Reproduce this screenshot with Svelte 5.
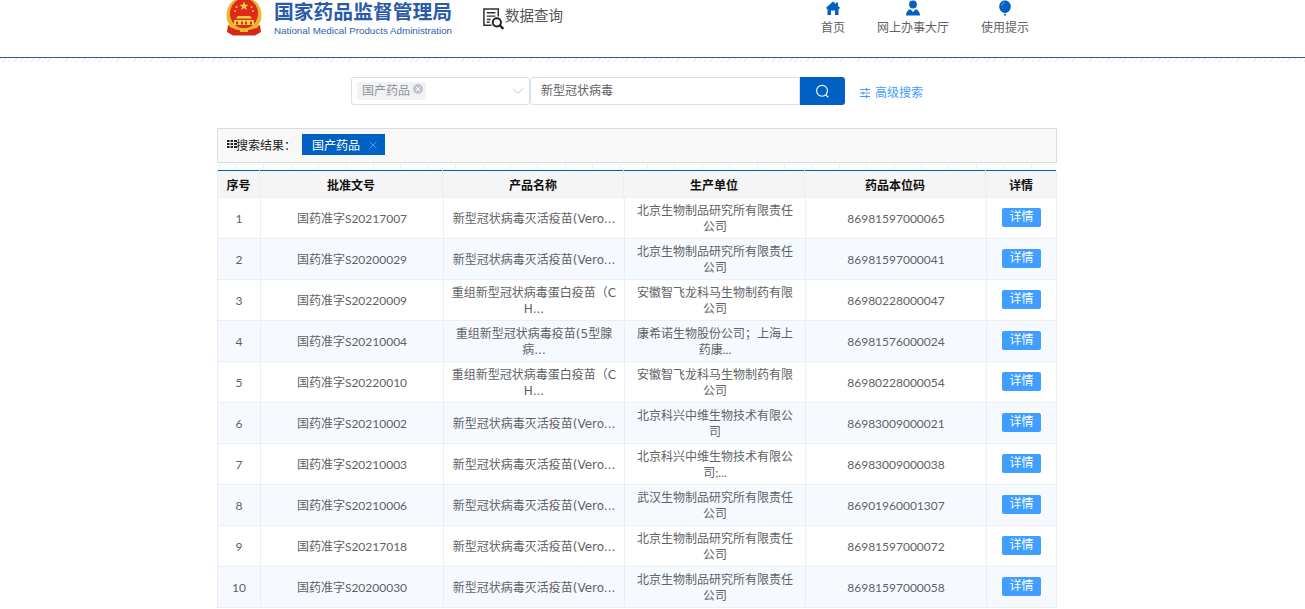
<script lang="ts">
  interface Row {
    no: number;
    approval: string;
    name: string;
    maker: string;
    code: string;
  }

  const nav = [
    { label: "首页", icon: "home" },
    { label: "网上办事大厅", icon: "user" },
    { label: "使用提示", icon: "bulb" },
  ];

  const sinovac = "北京科兴中维生物技术有限公司";
  const wuhan = "武汉生物制品研究所有限责任公司";
  const beijing = "北京生物制品研究所有限责任公司";
  const anhui = "安徽智飞龙科马生物制药有限公司";
  const vero = "新型冠状病毒灭活疫苗(Vero...";
  const cho = "重组新型冠状病毒蛋白疫苗（CH...";

  const rows: Row[] = [
    { no: 1, approval: "国药准字S20217007", name: vero, maker: beijing, code: "86981597000065" },
    { no: 2, approval: "国药准字S20200029", name: vero, maker: beijing, code: "86981597000041" },
    { no: 3, approval: "国药准字S20220009", name: cho, maker: anhui, code: "86980228000047" },
    { no: 4, approval: "国药准字S20210004", name: "重组新型冠状病毒疫苗(5型腺病...", maker: "康希诺生物股份公司；上海上药康...", code: "86981576000024" },
    { no: 5, approval: "国药准字S20220010", name: cho, maker: anhui, code: "86980228000054" },
    { no: 6, approval: "国药准字S20210002", name: vero, maker: sinovac, code: "86983009000021" },
    { no: 7, approval: "国药准字S20210003", name: vero, maker: "北京科兴中维生物技术有限公司;...", code: "86983009000038" },
    { no: 8, approval: "国药准字S20210006", name: vero, maker: wuhan, code: "86901960001307" },
    { no: 9, approval: "国药准字S20217018", name: vero, maker: beijing, code: "86981597000072" },
    { no: 10, approval: "国药准字S20200030", name: vero, maker: beijing, code: "86981597000058" },
  ];
</script>

<div class="page">
  <header class="header">
    <div class="header-inner">
      <div class="brand">
        <svg class="emblem" viewBox="0 4 36 36" width="36" height="36" aria-hidden="true">
          <ellipse cx="18" cy="19" rx="17.5" ry="18" fill="#e9b52c" />
          <ellipse cx="18" cy="17.5" rx="14" ry="15" fill="#e0291b" />
          <path d="M18 5.500l1.300 3.300h3.300l-2.700 2 1 3.200-2.900-2-2.900 2 1-3.200-2.700-2h3.300z" fill="#f6d23c" />
          <circle cx="10.5" cy="11" r="1" fill="#f6d23c" />
          <circle cx="25.5" cy="11" r="1" fill="#f6d23c" />
          <circle cx="9" cy="15" r="1" fill="#f6d23c" />
          <circle cx="27" cy="15" r="1" fill="#f6d23c" />
          <path d="M12 20h12l2 2.500H10z" fill="#f6d23c" />
          <rect x="8" y="24" width="20" height="5" fill="#f6d23c" />
          <path d="M10 25.500h2v3h-2zM15 25.500h2v3h-2zM19 25.500h2v3h-2zM24 25.500h2v3h-2z" fill="#c9321f" />
          <path d="M2 29q16 8 32 0l1 7-6 3.500H7L1 36z" fill="#d6281a" />
          <path d="M4 30q14 7 28 0" stroke="#ecb92e" stroke-width="2" fill="none" />
          <rect x="14" y="33" width="8" height="3" fill="#ecb92e" />
        </svg>
        <div class="brand-text">
          <div class="brand-cn">国家药品监督管理局</div>
          <div class="brand-en">National Medical Products Administration</div>
        </div>
      </div>
      <div class="query">
        <svg viewBox="0 0 24 24" width="23" height="23" aria-hidden="true">
          <path d="M10 19H2V2h15v8" fill="none" stroke="#333" stroke-width="1.6" />
          <path d="M5 6h9M5 9.500h9M5 13h4M5 16h3" stroke="#333" stroke-width="1.5" />
          <circle cx="15.5" cy="16" r="4.3" fill="none" stroke="#222" stroke-width="2" />
          <path d="M18.500 19l3.800 3.800" stroke="#222" stroke-width="2.4" />
        </svg>
        <span>数据查询</span>
      </div>
      <nav class="nav">
        {#each nav as item}
          <div class="nav-item">
            <svg viewBox="0 0 16 16" width="16" height="16" aria-hidden="true">
              {#if item.icon === "home"}
                <path d="M8 1.500L11 4V2.500h2v3.400L15 7.800 14 9h-.5v6H10v-4.500H6V15H2.500V9H2L1 7.800z" fill="#0061c2" />
              {:else if item.icon === "user"}
                <circle cx="8" cy="4.5" r="3.9" fill="#0061c2" />
                <path d="M1 15.500c0-3.500 2.200-6 4.500-6.300L8 12l2.500-2.800c2.300.3 4.500 2.800 4.500 6.300z" fill="#0061c2" />
              {:else}
                <path d="M8 .5c3.300 0 5.800 2.700 5.800 6 0 3.200-2.500 6.500-5.800 6.500S2.200 9.700 2.200 6.500c0-3.300 2.500-6 5.800-6z" fill="#0061c2" />
                <path d="M5 5.500c.2-1.500 1-2.500 2.300-3" fill="none" stroke="#9cc4ec" stroke-width="1" />
                <path d="M6.800 14.200h2.400M7.300 15.700h1.400" stroke="#0061c2" stroke-width="1.1" />
              {/if}
            </svg>
            <span>{item.label}</span>
          </div>
        {/each}
      </nav>
    </div>
  </header>
  <div class="header-strip"></div>

  <main class="main">
    <div class="search">
      <div class="select">
        <span class="select-tag">国产药品
          <svg viewBox="0 0 10 10" width="10" height="10" aria-hidden="true">
            <circle cx="5" cy="5" r="5" fill="#c0c4cc" />
            <path d="M3 3l4 4M7 3l-4 4" stroke="#fff" stroke-width="1" />
          </svg>
        </span>
        <svg class="chevron" viewBox="0 0 12 8" width="12" height="8" aria-hidden="true">
          <path d="M1 1.500l5 5 5-5" fill="none" stroke="#c0c4cc" stroke-width="1" />
        </svg>
      </div>
      <div class="keyword">新型冠状病毒</div>
      <button class="search-btn" aria-label="搜索">
        <svg viewBox="0 0 16 16" width="15" height="15" aria-hidden="true">
          <circle cx="7.5" cy="7.2" r="5.8" fill="none" stroke="#fff" stroke-width="1.2" />
          <path d="M11.600 11.500l2.600 2.800" stroke="#fff" stroke-width="1.2" />
        </svg>
      </button>
      <div class="advanced">
        <svg viewBox="0 0 12 12" width="12" height="12" aria-hidden="true">
          <path d="M1 2.500h10M1 6h10M1 9.500h10" stroke="#409eff" stroke-width="1" />
          <path d="M7.500 1v3M4 4.500v3M7.500 8v3" stroke="#409eff" stroke-width="1.2" />
        </svg>
        高级搜索
      </div>
    </div>

    <div class="results">
      <div class="results-title">
        <svg viewBox="0 0 10 8" width="10" height="8" aria-hidden="true">
          <path d="M0 0h2.500v2H0zM3.500 0h2.500v2H3.500zM7 0h3v2H7zM0 3h2.500v2H0zM3.500 3h2.500v2H3.500zM7 3h3v2H7zM0 6h2.500v2H0zM3.500 6h2.500v2H3.500zM7 6h3v2H7z" fill="#222" />
        </svg>
        搜索结果：
      </div>
      <span class="result-tag">国产药品
        <svg viewBox="0 0 8 8" width="8" height="8" aria-hidden="true">
          <path d="M.5.500l7 7M7.500.500l-7 7" stroke="#409eff" stroke-width="1" />
        </svg>
      </span>
    </div>
    <div class="results-gap"></div>

    <!-- header and body are separate tables, their column lines sit 1px apart -->
    <table class="table table-head">
      <colgroup>
        <col style="width: 42px" />
        <col style="width: 183px" />
        <col style="width: 181px" />
        <col style="width: 181px" />
        <col style="width: 181px" />
        <col style="width: 71px" />
      </colgroup>
      <thead>
        <tr>
          <th>序号</th>
          <th>批准文号</th>
          <th>产品名称</th>
          <th>生产单位</th>
          <th>药品本位码</th>
          <th>详情</th>
        </tr>
      </thead>
    </table>
    <table class="table">
      <colgroup>
        <col style="width: 43px" />
        <col style="width: 183px" />
        <col style="width: 181px" />
        <col style="width: 181px" />
        <col style="width: 181px" />
        <col style="width: 70px" />
      </colgroup>
      <tbody>
        {#each rows as row}
          <tr>
            <td>{row.no}</td>
            <td>{row.approval}</td>
            <td class="name">{row.name}</td>
            <td>{row.maker}</td>
            <td>{row.code}</td>
            <td><span class="detail">详情</span></td>
          </tr>
        {/each}
      </tbody>
    </table>
  </main>
</div>

<style>
  :global(body) {
    margin: 0;
    background: #fff;
    font-family: Lato, "Noto Sans CJK SC", "Liberation Sans", sans-serif;
  }

  .page {
    width: 1305px;
    height: 609px;
    overflow: hidden;
    background: #fff;
    color: #606266;
    font-size: 12px;
  }

  .header {
    height: 57px;
    background: #fff;
    border-bottom: 1px solid #1a5fa8;
  }

  .header-strip {
    height: 4px;
    background: repeating-linear-gradient(135deg, #eceef0 0 1px, #fff 1px 4px);
  }

  .header-inner {
    width: 804px;
    margin-left: 225px;
    display: flex;
    align-items: flex-start;
  }

  .brand {
    display: flex;
  }

  .emblem {
    margin: 0 12px 0 1px;
  }

  .brand-text {
    width: 178px;
  }

  .brand-cn {
    color: #2a5ba8;
    font-size: 19.8px;
    font-weight: 700;
    line-height: 22px;
    white-space: nowrap;
  }

  .brand-en {
    color: #2f62ad;
    font-family: "Liberation Sans", sans-serif;
    font-size: 9.8px;
    line-height: 14px;
    margin-top: 2px;
    white-space: nowrap;
  }

  .query {
    display: flex;
    align-items: flex-start;
    margin: 7px 0 0 30px;
    color: #555;
    font-size: 14.5px;
    line-height: 18px;
  }

  .nav {
    display: flex;
    margin-left: auto;
    gap: 32px;
  }

  .nav-item {
    display: flex;
    flex-direction: column;
    align-items: center;
    color: #606266;
    font-size: 12px;
    line-height: 18px;
    gap: 3px;
  }

  .main {
    width: 840px;
    margin-left: 217px;
  }

  .search {
    display: flex;
    align-items: center;
    margin: 15px 0 0 134px;
    height: 28px;
  }

  .select {
    width: 167px;
    height: 26px;
    border: 1px solid #dcdfe6;
    border-radius: 3px;
    background: #fff;
    display: flex;
    align-items: center;
    justify-content: space-between;
    padding: 0 5px;
  }

  .select-tag {
    display: inline-flex;
    align-items: center;
    gap: 3px;
    height: 15px;
    padding: 0 3px 3px 5px;
    margin-bottom: 1px;
    border-radius: 2px;
    background: #f0f2f5;
    color: #909399;
  }

  .keyword {
    width: 258px;
    height: 26px;
    border: 1px solid #dcdfe6;
    border-radius: 3px 0 0 3px;
    background: #fff;
    padding-left: 10px;
    line-height: 25px;
    color: #606266;
  }

  .search-btn {
    width: 45px;
    height: 28px;
    border: 0;
    border-radius: 0 3px 3px 0;
    background: #0061c2;
    padding: 0;
    display: flex;
    align-items: center;
    justify-content: center;
  }

  .advanced {
    display: flex;
    align-items: center;
    gap: 4px;
    margin-left: 14px;
    color: #409eff;
    line-height: 28px;
    padding-top: 4px;
  }

  .results {
    height: 31px;
    margin-top: 23px;
    border: 1px solid #dcdcdc;
    background: #f8f8f8;
    display: flex;
    align-items: center;
    padding: 0 0 2px 9px;
  }

  .results-title {
    display: flex;
    align-items: center;
    color: #222;
    margin-right: 6px;
    padding-bottom: 1px;
  }

  .results-title svg {
    margin-right: -1px;
  }

  .result-tag {
    display: inline-flex;
    align-items: center;
    height: 20px;
    width: 73px;
    padding: 0 0 1px 10px;
    background: #0061c2;
    color: #fff;
  }

  .result-tag svg {
    margin-left: 9px;
    margin-top: 1px;
  }

  .results-gap {
    height: 7px;
    width: 839px;
    background-color: #fbfcfe;
    background-image: repeating-linear-gradient(90deg, #eef1f6 0 1px, transparent 1px 27.4px);
    background-position: 19px 0;
  }

  .table {
    width: 839px;
    border-collapse: collapse;
    table-layout: fixed;
    background: #fff;
  }

  .table-head {
    border-top: 1px solid #0061c2;
  }

  th {
    height: 26px;
    padding: 0;
    background: #f5f5f5;
    border: 1px solid #ebeef5;
    border-top: 0;
    color: #111;
    font-size: 12px;
    font-weight: 700;
  }

  td {
    height: 39px;
    padding: 1px 7px 0;
    border: 1px solid #ebeef5;
    text-align: center;
    font-size: 12px;
    line-height: 16px;
    color: #606266;
    word-break: break-all;
  }

  td.name {
    font-family: "DejaVu Sans", "Noto Sans CJK SC", sans-serif;
  }

  tbody tr:first-child td {
    border-top: 0;
  }

  tbody tr:nth-child(even) td {
    background: #f6faff;
  }

  .detail {
    display: inline-block;
    width: 39px;
    height: 19px;
    margin-bottom: 3px;
    border-radius: 2px;
    background: #409eff;
    color: #fff;
    line-height: 18px;
  }
</style>
